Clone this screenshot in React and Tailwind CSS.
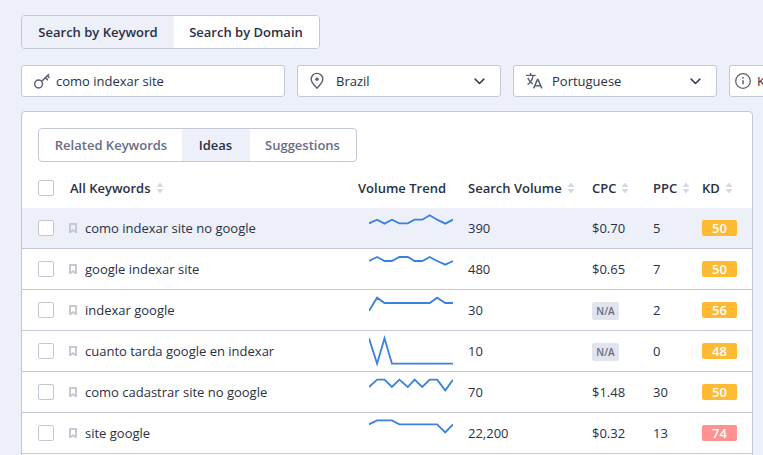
const xs = [60, 84, 106, 128, 150, 175, 195, 218, 240, 262, 286, 309];
const rows = [
  { k: "como indexar site no google", t: [46,35,47,35,46,46,35,35,22,35,47,35], v: "390", c: "$0.70", p: "5", d: "50", col: "bg-[#ffba33]", active: true },
  { k: "google indexar site", t: [36,24,36,36,24,24,36,36,24,36,47,36], v: "480", c: "$0.65", p: "7", d: "50", col: "bg-[#ffba33]" },
  { k: "indexar google", t: [62,23,39,39,39,39,39,39,39,23,39,39], v: "30", c: null, p: "2", d: "56", col: "bg-[#ffba33]" },
  { k: "cuanto tarda google en indexar", t: [22,98,22,98,98,98,98,98,98,98,98,98], v: "10", c: null, p: "0", d: "48", col: "bg-[#ffba33]" },
  { k: "como cadastrar site no google", t: [45,23,23,45,23,45,23,45,23,23,55,23], v: "70", c: "$1.48", p: "30", d: "50", col: "bg-[#ffba33]" },
  { k: "site google", t: [34,22,22,22,34,34,34,34,34,34,58,34], v: "22,200", c: "$0.32", p: "13", d: "74", col: "bg-[#ff9190]" },
];

const Sort = () => (
  <svg width="8" height="12" viewBox="0 0 8 12" className="ml-[5px] shrink-0" fill="#d5d9e3">
    <path d="M4 0.5 7.5 5H0.5z" />
    <path d="M4 11.5 7.5 7H0.5z" />
  </svg>
);
const Chevron = () => (
  <svg width="11" height="7" viewBox="0 0 12 8" fill="none" stroke="#3a3f55" strokeWidth="1.8" strokeLinecap="round" strokeLinejoin="round">
    <path d="M1 1.3 6 6.3l5-5" />
  </svg>
);
const Box = () => <span className="block w-4 h-4 shrink-0 rounded-[2px] border border-[#c3c8d6] bg-white" />;

const Field = ({ w, icon, text, chevron, pl }) => (
  <div className={`${w} h-8 shrink-0 flex items-center bg-white border border-[#c3c8d6] rounded-[3px] pr-[15px] ${pl}`}>
    {icon}
    <span className="flex-1 truncate">{text}</span>
    {chevron && <Chevron />}
  </div>
);

export default function App() {
  return (
    <div className="w-[763px] h-[455px] overflow-hidden bg-[#edf0f9] text-[13px] leading-[18px] text-[#2a2f45] pl-[21px] pt-[15px]" style={{ fontFamily: '"Open Sans", "Noto Sans", sans-serif' }}>
      <div className="flex w-[299px] h-[34px] rounded-[4px] border border-[#c3c8d6] overflow-hidden font-semibold">
        <div className="w-[152px] bg-[#edf0f9] flex items-center justify-center">Search by Keyword</div>
        <div className="flex-1 pr-px bg-white flex items-center justify-center">Search by Domain</div>
      </div>

      <div className="flex gap-3 mt-4 w-[800px]">
        <Field w="w-[264px]" pl="pl-[11px]" text="como indexar site" icon={
          <svg width="18" height="18" viewBox="0 0 18 18" fill="none" stroke="#5a5f73" strokeWidth="1.5" className="mr-[5px] shrink-0">
            <circle cx="5.6" cy="12" r="3.9" />
            <path d="M8.6 9.2 15.6 2.6M12.4 5.6l2 2M14.4 3.8l1.6 1.6" strokeLinecap="round" />
          </svg>
        } />
        <Field w="w-[204px]" pl="pl-[11px]" text="Brazil" chevron icon={
          <svg width="16" height="18" viewBox="0 0 16 18" fill="none" stroke="#5a5f73" strokeWidth="1.4" className="mr-[11px] shrink-0">
            <path d="M8 16.2C5 13 2.2 10.4 2.2 7.2a5.8 5.8 0 0 1 11.6 0c0 3.2-2.8 5.8-5.8 9z" strokeLinejoin="round" />
            <circle cx="8" cy="7.2" r="1.7" fill="#5a5f73" stroke="none" />
          </svg>
        } />
        <Field w="w-[204px]" pl="pl-[11px]" text="Portuguese" chevron icon={
          <svg width="18" height="18" viewBox="0 0 18 18" fill="none" stroke="#5a5f73" strokeWidth="1.4" className="mr-[9px] shrink-0">
            <path d="M1 3.4h9.6M5.6 1v2.4M2.6 12.6c3-2 4.8-5 5.6-9.2M2.8 6c1 2.6 3 4.6 5 5.8" />
            <path d="M8.6 16.4 12.4 7.6h.6l3.8 8.8M9.8 13.8h5.8" strokeWidth="1.5" />
          </svg>
        } />
        <Field w="w-[204px]" pl="pl-[5px]" text="Keyword" icon={
          <svg width="16" height="16" viewBox="0 0 16 16" fill="none" stroke="#5a5f73" strokeWidth="1.3" className="mr-[6px] shrink-0">
            <circle cx="8" cy="8" r="7.3" />
            <path d="M8 7.2v4" strokeWidth="1.5" />
            <circle cx="8" cy="4.8" r="0.9" fill="#5a5f73" stroke="none" />
          </svg>
        } />
      </div>

      <div className="w-[732px] h-[400px] mt-[14px] bg-white border border-[#c3c8d6] rounded-t-[4px]">
        <div className="pt-4 pl-4">
          <div className="flex w-[319px] h-[34px] rounded-[4px] border border-[#c3c8d6] overflow-hidden font-semibold text-[#686d84]">
            <div className="w-[143px] pl-px flex items-center justify-center">Related Keywords</div>
            <div className="w-[68px] pr-px bg-[#edf0f9] text-[#2a2f45] flex items-center justify-center">Ideas</div>
            <div className="flex-1 pr-px flex items-center justify-center">Suggestions</div>
          </div>
        </div>

        <div className="flex items-center h-[46px] pt-[6px] pl-4 font-semibold">
          <Box />
          <div className="w-[288px] ml-4 flex items-center">All Keywords<Sort /></div>
          <div className="w-[110px]">Volume Trend</div>
          <div className="w-[124px] flex items-center">Search Volume<Sort /></div>
          <div className="w-[61px] flex items-center">CPC<Sort /></div>
          <div className="w-[49px] flex items-center">PPC<Sort /></div>
          <div className="flex items-center">KD<Sort /></div>
        </div>

        {rows.map((r) => (
          <div key={r.k} className={`flex items-center h-[41px] pl-4 border-b border-[#c3c8d6] ${r.active ? "bg-[#edf0f9]" : ""}`}>
            <Box />
            <svg width="8" height="10" viewBox="0 0 8 10" className="ml-[15px] shrink-0" fill="none" stroke="#c5c9d5" strokeWidth="2">
              <path d="M1 9.4V1h6v8.4L4 7.2z" />
            </svg>
            <div className="w-[284px] ml-[8px] truncate">{r.k}</div>
            <svg width="84" height="40" viewBox="60 0 249 120" preserveAspectRatio="none" className="shrink-0" fill="none" stroke="#3d81de" strokeWidth="5.5" strokeLinejoin="miter">
              <polyline points={xs.map((x, i) => `${x},${r.t[i]}`).join(" ")} />
            </svg>
            <div className="w-[124px] ml-[15px]">{r.v}</div>
            <div className="w-[61px]">
              {r.c ?? <span className="inline-flex items-center justify-center w-[27px] h-[18px] rounded-[2px] bg-[#e1e4ec] text-[#686d84] text-[10px] font-semibold">N/A</span>}
            </div>
            <div className="w-[49px]">{r.p}</div>
            <div className={`w-[35px] h-4 rounded-[2px] flex items-center justify-center text-white font-semibold ${r.col}`}>{r.d}</div>
          </div>
        ))}
      </div>
    </div>
  );
}
